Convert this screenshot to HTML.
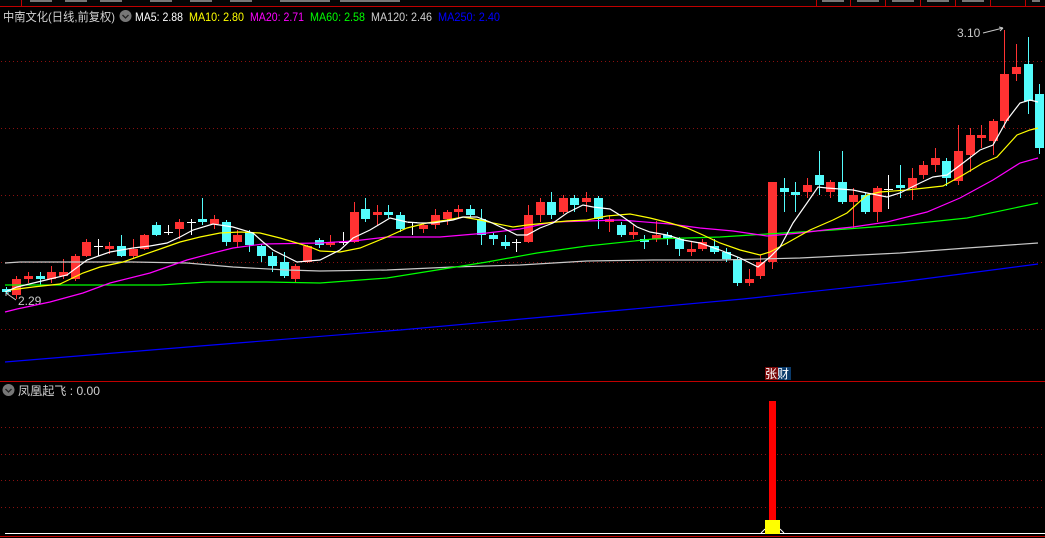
<!DOCTYPE html>
<html><head><meta charset="utf-8"><style>
html,body{margin:0;padding:0;background:#000;width:1045px;height:538px;overflow:hidden}
svg{display:block}
text{font-family:"Liberation Sans","Noto Sans CJK SC",sans-serif;font-size:12px}
</style></head><body>
<svg id="s" width="1045" height="538" viewBox="0 0 1045 538" xmlns="http://www.w3.org/2000/svg">
<rect width="1045" height="538" fill="#000"/>
<rect x="0" y="0" width="1045" height="6" fill="#050505"/>
<line x1="0" y1="6.5" x2="1045" y2="6.5" stroke="#c00000" stroke-width="1"/>
<line x1="21.5" y1="0" x2="21.5" y2="6" stroke="#c00000"/>
<g stroke="#c00000"><line x1="816.5" y1="0" x2="816.5" y2="6"/><line x1="850.5" y1="0" x2="850.5" y2="6"/><line x1="885.5" y1="0" x2="885.5" y2="6"/><line x1="920.5" y1="0" x2="920.5" y2="6"/><line x1="955.5" y1="0" x2="955.5" y2="6"/><line x1="990.5" y1="0" x2="990.5" y2="6"/><line x1="1025.5" y1="0" x2="1025.5" y2="6"/></g>
<g fill="#777"><rect x="30" y="0" width="22" height="2"/><rect x="65" y="0" width="22" height="2"/><rect x="100" y="0" width="22" height="2"/><rect x="150" y="0" width="22" height="2"/><rect x="190" y="0" width="22" height="2"/><rect x="230" y="0" width="22" height="2"/><rect x="280" y="0" width="50" height="2"/><rect x="340" y="0" width="60" height="2"/><rect x="822" y="0" width="22" height="2"/><rect x="857" y="0" width="22" height="2"/><rect x="892" y="0" width="22" height="2"/><rect x="927" y="0" width="22" height="2"/><rect x="962" y="0" width="22" height="2"/><rect x="1032" y="0" width="8" height="2"/></g>
<g stroke="#8a1010" stroke-width="1" stroke-dasharray="1 3">
<line x1="1" y1="61.5" x2="1045" y2="61.5"/><line x1="1" y1="128.5" x2="1045" y2="128.5"/><line x1="1" y1="195.5" x2="1045" y2="195.5"/><line x1="1" y1="262.5" x2="1045" y2="262.5"/><line x1="1" y1="329.5" x2="1045" y2="329.5"/>
<line x1="1" y1="427.5" x2="1045" y2="427.5"/><line x1="1" y1="454.5" x2="1045" y2="454.5"/><line x1="1" y1="480.5" x2="1045" y2="480.5"/><line x1="1" y1="507.5" x2="1045" y2="507.5"/>
</g>
<line x1="0" y1="381.5" x2="1045" y2="381.5" stroke="#c00000"/>
<line x1="5" y1="533.5" x2="1045" y2="533.5" stroke="#fff"/>
<line x1="0" y1="536.5" x2="1045" y2="536.5" stroke="#c00000"/>
<text x="3" y="21" fill="#d0d0d0" textLength="112" lengthAdjust="spacingAndGlyphs">中南文化(日线,前复权)</text>
<circle cx="125.5" cy="16" r="6" fill="#777"/><path d="M122.5 15 L125.5 18 L128.5 15" stroke="#222" fill="none" stroke-width="1.3"/>
<text x="135" y="21" fill="#fff" textLength="48" lengthAdjust="spacingAndGlyphs">MA5: 2.88</text>
<text x="189" y="21" fill="#ffff00" textLength="55" lengthAdjust="spacingAndGlyphs">MA10: 2.80</text>
<text x="250" y="21" fill="#ff00ff" textLength="54" lengthAdjust="spacingAndGlyphs">MA20: 2.71</text>
<text x="310" y="21" fill="#00ff00" textLength="55" lengthAdjust="spacingAndGlyphs">MA60: 2.58</text>
<text x="371" y="21" fill="#d0d0d0" textLength="61" lengthAdjust="spacingAndGlyphs">MA120: 2.46</text>
<text x="438" y="21" fill="#0000ff" textLength="62" lengthAdjust="spacingAndGlyphs">MA250: 2.40</text>
<circle cx="8.5" cy="390" r="6" fill="#777"/><path d="M5.5 389 L8.5 392 L11.5 389" stroke="#222" fill="none" stroke-width="1.3"/>
<text x="18" y="395" fill="#d0d0d0" textLength="82" lengthAdjust="spacingAndGlyphs">凤凰起飞 : 0.00</text>
<text x="18" y="305" fill="#c8c8c8">2.29</text>
<path d="M16 300 L6 293 M6 293 L9 293 M6 293 L6 296" stroke="#c8c8c8" fill="none"/>
<text x="957" y="37" fill="#c8c8c8">3.10</text>
<path d="M983 33 L1003 28 M1003 28 L999 27 M1003 28 L1000 31" stroke="#c8c8c8" fill="none"/>
<g id="cand"></g>
<g fill="none" stroke-width="1.2">
<polyline stroke="#0000ff" points="5,362 200,346 400,330 600,312 743,299 900,282 1038,264"/>
<polyline stroke="#c8c8c8" points="5,263 20,262 133,262 187,263 233,267 287,270 320,271 387,270 453,267 520,265 587,261 653,260 720,260 800,258 900,253 967,248 1038,243"/>
<polyline stroke="#00ff00" points="5,285 43,285 160,285 207,282 267,282 320,283 387,278 437,270 487,262 537,253 587,246 653,239 720,237 767,234 833,230 900,225 967,218 1038,203"/>
<polyline stroke="#ff00ff" points="5,312 17,309 50,302 83,293 110,283 150,273 187,260 217,252 233,248 263,244 320,243 353,241 387,237 440,237 487,233 520,229 553,222 620,220 670,224 700,228 733,231 767,236 800,233 833,229 853,227 887,222 927,212 960,198 993,180 1020,163 1038,158"/>
<polyline stroke="#ffff00" points="10,290 33,287 60,284 83,273 100,267 123,262 140,256 163,248 180,242 200,237 220,233 240,232 260,233 280,238 297,243 310,247 320,251 340,252 360,248 387,237 407,228 427,223 447,220 463,217 480,220 493,223 513,227 527,225 547,223 567,221 587,220 607,216 630,214 650,218 670,223 687,228 703,235 720,243 740,250 760,255 770,252 787,243 810,230 833,220 847,213 867,195 880,192 907,190 943,186 963,175 983,163 997,157 1017,135 1030,130 1038,128"/>
<polyline stroke="#ffffff" points="5,292 17,287 50,279 67,275 87,260 110,252 133,248 150,246 167,243 180,237 193,230 213,224 233,227 253,233 263,242 273,250 287,257 297,262 320,260 340,250 353,238 370,230 390,218 407,222 420,223 433,223 453,220 463,217 477,217 490,222 507,230 517,235 527,235 540,228 553,223 567,213 583,205 593,207 610,209 623,217 637,227 650,232 667,235 683,240 700,243 720,250 740,258 758,267 770,257 780,247 793,223 807,203 818,187 827,188 853,190 867,193 887,197 900,193 920,183 933,177 947,175 963,163 980,150 993,145 1007,120 1020,103 1030,100 1038,102"/>
</g>
<rect x="765" y="367" width="13" height="13" fill="#7a0a0a"/><rect x="778" y="367" width="13" height="13" fill="#0a3a6a"/>
<text x="765" y="378" fill="#fff" style="font-size:12px">张财</text>
<rect x="769" y="401" width="7" height="120" fill="#ff0000"/>
<rect x="765" y="520" width="15" height="14" fill="#ffff00"/>
<path d="M761 533 L765 529 M780 529 L784 533" stroke="#fff"/>
</svg>
<script>
var C=[
[2,289,292,287,294,'c'],[12,279,295,276,299,'r'],[24,276,279,272,283,'r'],[36,276,279,272,286,'c'],[47,272,279,266,283,'r'],[59,272,276,259,279,'r'],[71,256,279,254,281,'r'],[82,242,256,239,257,'r'],[94,246,246,239,256,'w'],[105,246,249,242,254,'r'],[117,246,256,235,257,'c'],[129,249,256,239,259,'r'],[140,235,249,234,250,'r'],[152,225,235,222,236,'c'],[164,232,232,225,235,'w'],[175,222,229,219,239,'r'],[187,222,222,219,235,'w'],[198,219,222,198,225,'c'],[210,219,224,215,229,'r'],[222,222,242,220,246,'c'],[233,235,242,230,248,'r'],[245,232,245,230,252,'c'],[257,246,256,244,262,'c'],[268,256,266,252,272,'c'],[280,262,276,252,278,'c'],[291,266,279,264,283,'r'],[303,246,262,245,263,'r'],[315,240,245,238,248,'c'],[326,242,245,235,247,'r'],[339,242,242,232,245,'w'],[350,212,242,202,243,'r'],[361,209,219,198,222,'c'],[373,212,215,205,225,'r'],[384,212,215,205,218,'c'],[396,215,229,212,232,'c'],[408,222,222,222,235,'w'],[419,225,229,223,233,'r'],[431,215,225,209,229,'r'],[443,212,219,210,225,'r'],[454,209,212,205,219,'r'],[466,209,215,205,217,'c'],[477,219,235,209,245,'c'],[489,235,239,233,245,'c'],[501,242,246,235,249,'c'],[512,242,242,239,252,'w'],[524,215,242,205,243,'r'],[536,202,215,198,222,'r'],[547,202,215,192,219,'c'],[559,198,212,195,214,'r'],[570,198,205,195,212,'c'],[582,198,202,192,212,'r'],[594,198,219,196,229,'c'],[605,219,222,215,232,'r'],[617,225,235,222,237,'c'],[629,232,235,225,239,'r'],[640,239,242,235,249,'c'],[652,235,239,221,242,'r'],[663,235,239,232,245,'c'],[675,239,249,237,256,'c'],[687,249,252,242,256,'r'],[698,242,249,239,251,'r'],[710,246,252,239,254,'c'],[722,252,259,248,262,'c'],[733,259,283,257,286,'c'],[745,279,283,269,286,'r'],[756,262,276,255,279,'r'],[768,182,262,182,269,'r'],[780,188,192,178,212,'c'],[791,192,195,182,212,'c'],[803,185,192,178,198,'r'],[815,175,185,151,195,'c'],[826,182,192,180,198,'r'],[838,182,202,151,204,'c'],[849,195,202,188,228,'r'],[861,195,212,193,214,'c'],[873,188,212,186,222,'r'],[884,189,189,175,209,'w'],[896,185,188,165,198,'c'],[908,178,188,168,200,'r'],[919,165,175,161,179,'r'],[931,158,165,148,172,'r'],[942,161,178,158,186,'c'],[954,151,181,125,185,'r'],[966,135,155,128,172,'r'],[977,135,138,125,148,'r'],[989,121,141,119,155,'r'],[1000,74,121,30,128,'r'],[1012,67,74,44,81,'r'],[1024,64,101,37,114,'c'],[1035,94,148,84,154,'c']];
var g=document.getElementById('cand'),h='';
C.forEach(function(c){var x=c[0],col=c[5]=='r'?'#ff3232':c[5]=='c'?'#54fcfc':'#ffffff',m=x+4.5;
h+='<line x1="'+m+'" y1="'+c[3]+'" x2="'+m+'" y2="'+c[4]+'" stroke="'+col+'" stroke-width="1"/>';
var hh=Math.max(1,c[2]-c[1]);h+='<rect x="'+x+'" y="'+c[1]+'" width="9" height="'+(c[5]=='w'?1:hh)+'" fill="'+col+'"/>';});
g.innerHTML=h;
</script>
</body></html>
